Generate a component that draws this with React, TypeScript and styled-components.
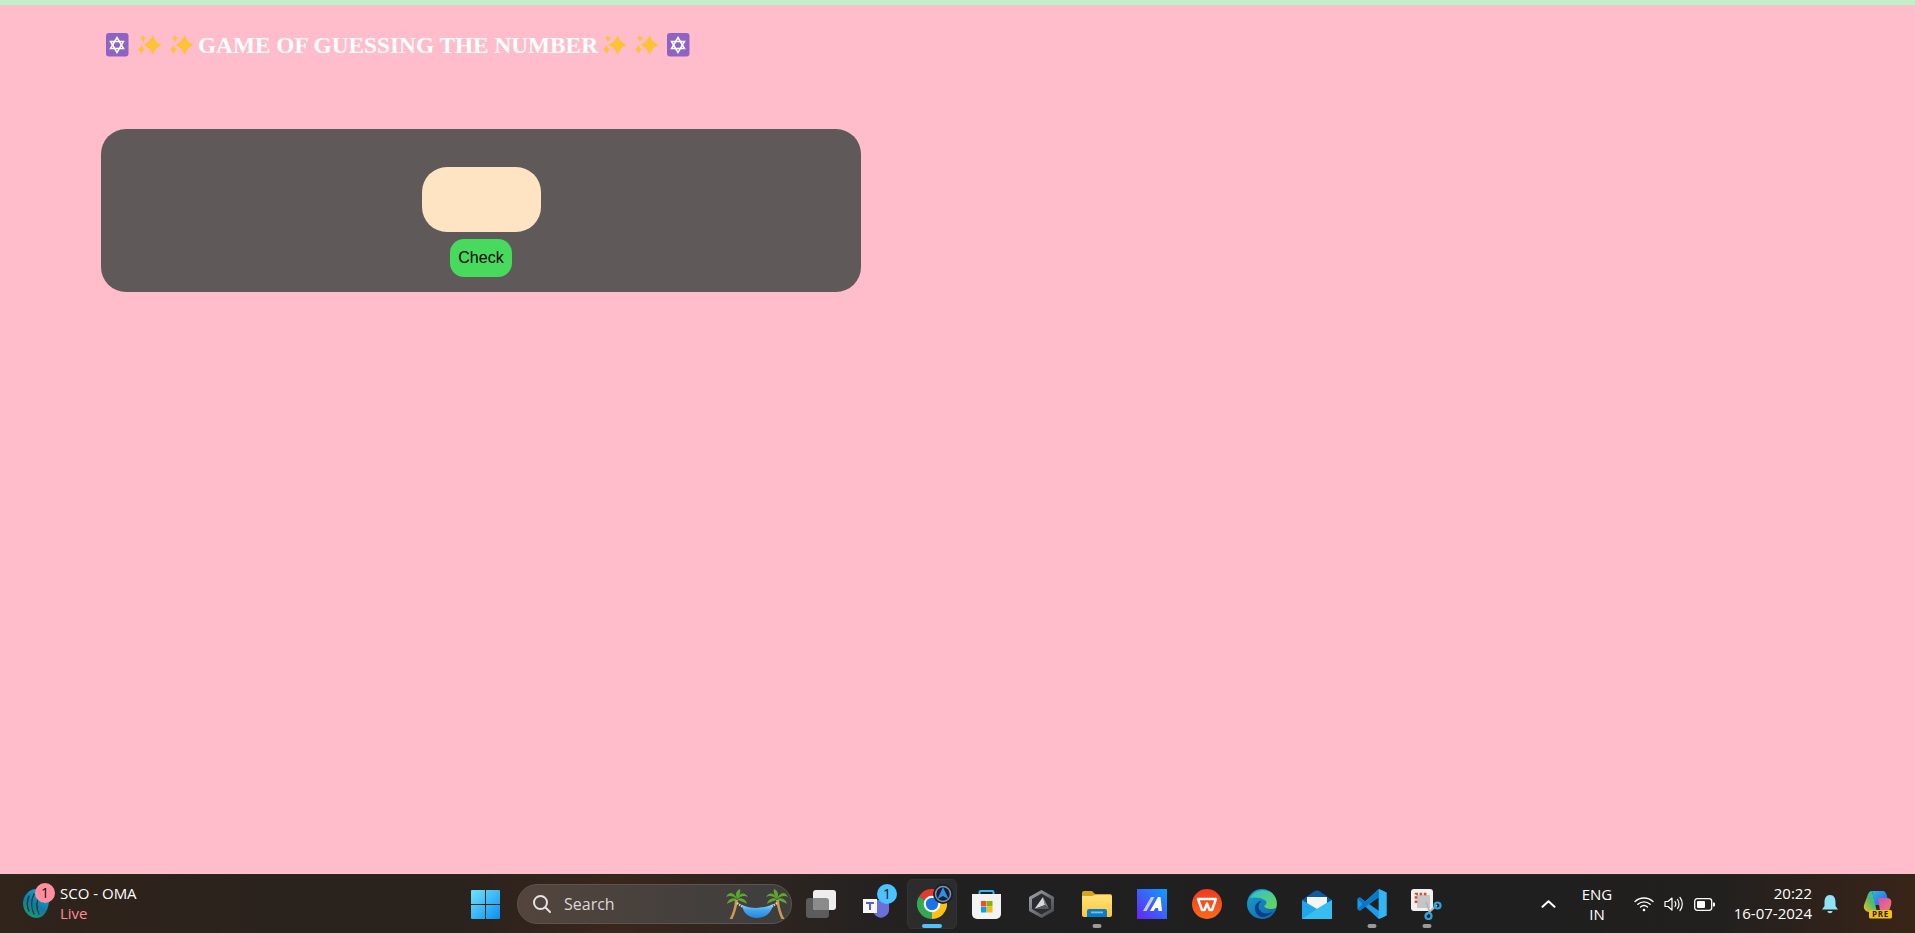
import React from "react";
import styled, { createGlobalStyle } from "styled-components";

const Global = createGlobalStyle`
  html, body { margin: 0; padding: 0; height: 100%; overflow: hidden; }
  #root { height: 100%; }
`;

const Screen = styled.div`
  width: 1915px; height: 933px; display: flex; flex-direction: column; background: #ffbcca;
`;
const TopStrip = styled.div`height: 5px; background: #c1f0c8; flex: none;`;
const Page = styled.main`flex: 1; padding: 0 0 0 101px; min-height: 0;`;
const Title = styled.h1`
  margin: 24px 0 0 4px; height: 32px; white-space: nowrap; color: #fff;
  font: bold 23.3px/32px "Liberation Serif", serif; display: flex; align-items: center;
`;
const Emoji = styled.svg<{ $gap?: number; $lead?: number }>`
  width: 24px; height: 24px; flex: none; margin-right: ${p => p.$gap ?? 0}px; margin-left: ${p => p.$lead ?? 0}px;
`;
const Card = styled.section`
  margin-top: 68px; width: 760px; height: 163px; background: #5f5a59; border-radius: 25px;
  display: flex; flex-direction: column; align-items: center; box-sizing: border-box; padding-top: 38px;
`;
const GuessInput = styled.input`
  width: 119px; height: 65px; border: 0; border-radius: 25px; background: #ffe4c4; padding: 0; outline: 0;
  display: block;
`;
const CheckButton = styled.button`
  margin-top: 7px; width: 62px; height: 38px; border: 0; border-radius: 14px; background: #47da5d; color: #000;
  font: 16px "Liberation Sans", sans-serif; padding: 0;
`;
const Taskbar = styled.footer`
  flex: none; height: 59px; display: flex; align-items: center; color: #fff;
  font-family: "Open Sans", "Noto Sans", sans-serif;
  background: linear-gradient(90deg, #30241b 0%, #2a221c 14%, #2a221d 24%, #3a261c 32%, #2d2521 40%, #212020 48%, #1f1f1f 80%, #22201e 90%, #3a2418 100%);
  border-top: 1px solid #2a2624; box-sizing: border-box;
`;
const Widget = styled.div`width: 460px; flex: none; display: flex; align-items: center; padding-left: 22px; box-sizing: border-box; gap: 9px;`;
const IconWrap = styled.div<{ $w: number; $h: number }>`position: relative; flex: none; width: ${p => p.$w}px; height: ${p => p.$h}px;`;
const Badge = styled.span<{ $bg: string; $top: number; $right: number }>`
  position: absolute; top: ${p => p.$top}px; right: ${p => p.$right}px; width: 20px; height: 20px; border-radius: 50%; background: ${p => p.$bg};
  color: #111; font-size: 14px; line-height: 20px; text-align: center;
`;
const WidgetText = styled.div`display: flex; flex-direction: column; font-size: 15px; line-height: 20px; white-space: nowrap; padding-bottom: 2px; margin-left: -1px;`;
const Live = styled.span`color: #ff8a9c;`;
const StartSlot = styled.div`width: 50px; flex: none; display: flex; justify-content: center;`;
const SearchBox = styled.div`
  margin-left: 7px; margin-right: 2px; width: 275px; height: 40px; flex: none; border-radius: 20px; box-sizing: border-box;
  background: linear-gradient(90deg, #53453d, #45403d 60%, #3f3e3d); border: 1px solid #5a5552;
  display: flex; align-items: center; padding: 0 3px 0 14px; color: #d9d9d9; font-size: 16px;
`;
const SearchLabel = styled.span`margin-left: 12px; flex: 1;`;
const Slot = styled.div<{ $active?: boolean }>`
  position: relative; isolation: isolate; width: 55px; height: 50px; flex: none; display: flex; align-items: center; justify-content: center;
  &::before { content: ""; position: absolute; z-index: -1; inset: 0 2.5px; border-radius: 5px;
    background: ${p => (p.$active ? "#2c2c2c" : "transparent")}; border: ${p => (p.$active ? "1px solid #333" : "0")}; }
`;
const Running = styled.span<{ $active?: boolean }>`
  position: absolute; bottom: 1px; left: 50%; transform: translateX(-50%); height: 4px; border-radius: 2px;
  width: ${p => (p.$active ? 20 : 9)}px; background: ${p => (p.$active ? "#4cc2ff" : "#9a9a9a")};
`;
const Tray = styled.div`
  margin-left: auto; display: flex; align-items: center; font-size: 15px; line-height: 20px; height: 100%;
`;
const Caret = styled.div`width: 16px; display: flex; justify-content: center; margin-right: 21px;`;
const Lang = styled.div`width: 40px; text-align: center; margin-right: 17px;`;
const TrayIcons = styled.div`display: flex; align-items: center; gap: 10px; margin-right: 7px;`;
const Clock = styled.div`width: 90px; text-align: right; white-space: nowrap; padding-bottom: 2px;`;
const Bell = styled.div`margin: 0 23px 0 8px; width: 20px; display: flex; justify-content: center;`;
const Copilot = styled.div`margin-right: 22px; width: 30px; display: flex;`;
const ChromeBadge = styled.span`
  position: absolute; top: 4.5px; left: 29px; width: 20px; height: 20px; display: flex;
`;

const Star = ({ gap, lead }: { gap?: number; lead?: number }) => (
  <Emoji viewBox="0 0 24 24" $gap={gap} $lead={lead}>
    <rect x="1" y="0" width="22.500" height="23.500" rx="3" fill="#8e63c4" />
    <g fill="none" stroke="#fff" strokeWidth="1.500">
      <path d="M12 4.500 18.500 15.500H5.500Z" />
      <path d="M12 19.500 5.500 8.500H18.500Z" />
    </g>
  </Emoji>
);
const Sparkles = ({ gap, lead }: { gap?: number; lead?: number }) => (
  <Emoji viewBox="0 0 24 24" $gap={gap} $lead={lead}>
    <g fill="#fcc434">
      <path d="M14.500 2Q17 9.500 23.500 12 17 14.500 14.500 22 12 14.500 5.500 12 12 9.500 14.500 2Z" />
      <path d="M5 2Q5.800 4.600 8 5.500 5.800 6.400 5 9 4.200 6.400 2 5.500 4.200 4.600 5 2Z" />
      <path d="M3.500 12Q4.400 15.200 7 16.500 4.400 17.800 3.500 21 2.600 17.800 0 16.500 2.600 15.200 3.500 12Z" />
    </g>
  </Emoji>
);

const Ic = styled.svg`display: block; flex: none;`;

const IccLogo = () => (
  <Ic width="30" height="32" viewBox="0 0 30 32">
    <defs>
      <linearGradient id="icc" x1="0.8" y1="0" x2="0.2" y2="1">
        <stop offset="0" stopColor="#17a9de" /><stop offset=".55" stopColor="#0f7ca0" /><stop offset="1" stopColor="#1f9a6a" />
      </linearGradient>
    </defs>
    <path d="M14 1C20 1 26 4 27 12 27 21 22 30 15 30 8 30 1 24 1 15 1 8 7 1 14 1Z" fill="url(#icc)" />
    <g fill="none" stroke="#17302f" strokeWidth="1.200" strokeLinecap="round">
      <path d="M7 8C5 13 5 19 7 23" />
      <path d="M12 6C9 12 9 20 12 26" />
      <path d="M18 7C14 13 14 20 17 26" />
    </g>
  </Ic>
);
const WinLogo = () => (
  <Ic width="29" height="29" viewBox="0 0 29 29">
    <defs>
      <linearGradient id="win" x1="0" y1="0" x2="1" y2="1">
        <stop offset="0" stopColor="#6fe3fb" /><stop offset="1" stopColor="#0a8ff0" />
      </linearGradient>
    </defs>
    <path fill="url(#win)" d="M1 0H14V14H0V1A1 1 0 0 1 1 0ZM15 0H28A1 1 0 0 1 29 1V14H15ZM0 15H14V29H1A1 1 0 0 1 0 28ZM15 15H29V28A1 1 0 0 1 28 29H15Z" />
  </Ic>
);
const SearchGlass = () => (
  <Ic width="20" height="20" viewBox="0 0 20 20" fill="none" stroke="#e4e4e4" strokeWidth="2" strokeLinecap="round">
    <circle cx="8.500" cy="8.500" r="6.500" /><path d="M13.500 13.500 18 18" />
  </Ic>
);
const Palm = () => (
  <g>
    <path d="M9 11C8.500 18 6.500 25 3.500 30H6.500C9 25 11 18 12 11Z" fill="#c79a5a" />
    <g fill="#5fa82e">
      <path d="M11 10C8 3 3 2 0 8 4 6 7 7 11 10Z" /><path d="M11 10C9 5 10 2 14 0 15 4 13 7 11 10Z" />
      <path d="M11 10C14 3 19 3 22 8 18 6 15 7 11 10Z" /><path d="M11 10C7 8 2 10 1 15 5 12 8 13 11 10Z" />
      <path d="M11 10C15 8 20 10 21 15 17 12 14 13 11 10Z" />
    </g>
  </g>
);
const Hammock = () => (
  <Ic width="62" height="31" viewBox="0 0 62 31">
    <Palm />
    <g transform="translate(62 0) scale(-1 1)"><Palm /></g>
    <path d="M11 14 20 20M51 14 42 20" stroke="#d5d5d5" strokeWidth="2.200" strokeDasharray="1.500 1" fill="none" />
    <defs>
      <linearGradient id="hmk" x1="0" y1="0" x2="0" y2="1"><stop offset="0" stopColor="#9adafa" /><stop offset=".45" stopColor="#3ea6ee" /><stop offset="1" stopColor="#2a86d8" /></linearGradient>
    </defs>
    <path d="M16 16C25 20 37 20 47 15 46 24 39 29 31 29 23 29 17 24 16 16Z" fill="url(#hmk)" />
  </Ic>
);
const TaskView = () => (
  <Ic width="31" height="28" viewBox="0 0 31 28">
    <rect x="0" y="8" width="23" height="20" rx="3" fill="#5c5c5c" />
    <rect x="7" y="0" width="23" height="20" rx="3" fill="#eeeeee" />
    <path d="M7 8H20A3 3 0 0 1 23 11V20H10A3 3 0 0 1 7 17Z" fill="#8b8b8b" />
  </Ic>
);
const Teams = () => (
  <Ic width="27" height="27" viewBox="0 0 27 27">
    <circle cx="21" cy="10" r="5" fill="#5059c9" />
    <path d="M10 9H24A2 2 0 0 1 26 11V17A8 8 0 0 1 10 20Z" fill="#6a70d8" />
    <rect x="0" y="8" width="14" height="14" fill="#f7f7f7" />
    <path d="M3 11H11V13H8V19H6V13H3Z" fill="#5b5fc7" />
  </Ic>
);
const Chrome = () => (
  <Ic width="30" height="30" viewBox="0 0 30 30">
    <path d="M15 15 2 7.500A15 15 0 0 1 28 7.500Z" fill="#e33b2e" />
    <path d="M15 15 2 7.500A15 15 0 0 0 15 30Z" fill="#34a853" />
    <path d="M15 15 15 30A15 15 0 0 0 28 7.500Z" fill="#fbc116" />
    <circle cx="15" cy="15" r="8.300" fill="#fff" />
    <circle cx="15" cy="15" r="6.200" fill="#1a73e8" />
  </Ic>
);
const SmallA = () => (
  <Ic width="20" height="20" viewBox="0 0 20 20">
    <circle cx="10" cy="10" r="10" fill="#16202e" />
    <circle cx="10" cy="10" r="7.500" fill="none" stroke="#7f93aa" strokeWidth="1.500" />
    <path d="M10 3 15.500 15 10 12 4.500 15Z" fill="#2f8ee8" />
  </Ic>
);
const Store = () => (
  <Ic width="29" height="29" viewBox="0 0 29 29">
    <path d="M7.500 5V2A1 1 0 0 1 8.500 1H20.500A1 1 0 0 1 21.500 2V5" stroke="#35b8f0" strokeWidth="2" fill="none" />
    <path d="M0 4H29V24A5 5 0 0 1 24 29H5A5 5 0 0 1 0 24Z" fill="#f3f3f3" />
    <rect x="9" y="11" width="5.500" height="5.500" fill="#f25022" /><rect x="15" y="11" width="5.500" height="5.500" fill="#7fba00" />
    <rect x="9" y="17" width="5.500" height="5.500" fill="#00a4ef" /><rect x="15" y="17" width="5.500" height="5.500" fill="#ffb900" />
  </Ic>
);
const Gem = () => (
  <Ic width="27" height="28" viewBox="0 0 27 28">
    <defs>
      <linearGradient id="gm" x1="0" y1="0" x2="1" y2="1"><stop offset="0" stopColor="#a4a8ad" /><stop offset="1" stopColor="#3f4247" /></linearGradient>
    </defs>
    <path d="M13.500 0 26 7V21L13.500 28 1 21V7Z" fill="url(#gm)" />
    <path d="M13.500 3.500 23 9V19L13.500 24.500 4 19V9Z" fill="#2a2c30" />
    <path d="M15 7 6.500 19 17 15Z" fill="#d6d8db" />
    <path d="M15 7 21 19 17 15Z" fill="#85888d" />
    <path d="M6.500 19H21L17 15Z" fill="#55585d" />
  </Ic>
);
const Folder = () => (
  <Ic width="30" height="26" viewBox="0 0 30 26">
    <defs>
      <linearGradient id="fld" x1="0" y1="0" x2="0" y2="1"><stop offset="0" stopColor="#ffe27a" /><stop offset="1" stopColor="#f9c63d" /></linearGradient>
    </defs>
    <path d="M0 2A2 2 0 0 1 2 0H10L13 3H28A2 2 0 0 1 30 5V10H0Z" fill="#d9a514" />
    <path d="M0 5H10L13 4H28A2 2 0 0 1 30 6V24A2 2 0 0 1 28 26H2A2 2 0 0 1 0 24Z" fill="url(#fld)" />
    <path d="M5 20A2 2 0 0 1 7 18H23A2 2 0 0 1 25 20V26H5Z" fill="#0c7cc4" />
    <rect x="9" y="20.500" width="12" height="1.800" fill="#6cc5f0" />
  </Ic>
);
const MApp = () => (
  <Ic width="30" height="30" viewBox="0 0 30 30">
    <defs>
      <linearGradient id="mapp" x1="0" y1="1" x2="1" y2="0">
        <stop offset="0" stopColor="#6a22f5" /><stop offset="1" stopColor="#0aa0ff" />
      </linearGradient>
    </defs>
    <rect width="30" height="30" fill="url(#mapp)" />
    <path d="M6 22 14 8H17.500L9.500 22Z" fill="#c8ccfa" />
    <path d="M13 22 21 8H23.500L25 22H21.500L21 19H18.500L16.500 22Z" fill="#fff" />
  </Ic>
);
const Wps = () => (
  <Ic width="30" height="30" viewBox="0 0 30 30">
    <defs>
      <linearGradient id="wps" x1="0" y1="0" x2="0" y2="1"><stop offset="0" stopColor="#ee3a20" /><stop offset="1" stopColor="#fb6a1c" /></linearGradient>
    </defs>
    <circle cx="15" cy="15" r="15" fill="url(#wps)" />
    <path d="M6 10H24L20 21H17.500L15 14.500 12.500 21H10Z" fill="none" stroke="#fff" strokeWidth="2.400" strokeLinejoin="round" />
  </Ic>
);
const Edge = () => (
  <Ic width="30" height="30" viewBox="0 0 30 30">
    <defs>
      <linearGradient id="edg" x1="0" y1="0" x2="1" y2="1">
        <stop offset="0" stopColor="#1aa3c9" /><stop offset="1" stopColor="#1060b0" />
      </linearGradient>
      <linearGradient id="edg2" x1="0" y1="0" x2="1" y2="1">
        <stop offset="0" stopColor="#2fc0d8" /><stop offset="1" stopColor="#6cd64a" />
      </linearGradient>
    </defs>
    <circle cx="15" cy="15" r="15" fill="url(#edg)" />
    <path d="M3 9C7 1 18 -1 25 4 29 8 31 13 29 19 24 21 18 20 17 17 19 16 20 14 19 12 15 8 6 8 3 9Z" fill="url(#edg2)" />
    <path d="M20 27C14 30 8 26 8 19 8 15 11 12 15 12 12 14 11 17 12 20 14 24 18 26 26 23 24 25 22 26 20 27Z" fill="#0c3f8a" />
  </Ic>
);
const Mail = () => (
  <Ic width="30" height="29" viewBox="0 0 30 29">
    <path d="M0 10 12 1.500Q15 -.5 18 1.500L30 10 15 20Z" fill="#0c5aa8" />
    <path d="M5 7H25V14L15 20 5 14Z" fill="#f5f5f5" />
    <path d="M0 10 15 19 30 10V29H0Z" fill="#1fa5ea" />
    <path d="M30 10V29H0L15 19Z" fill="#38bdf2" />
  </Ic>
);
const VsCode = () => (
  <Ic width="30" height="30" viewBox="0 0 30 31">
    <path d="M22 0 30 3.500V27.500L22 31 8 18 2.500 22.500 0 21V10L2.500 8.500 8 13ZM22 8.500 12 15.500 22 22.500Z" fill="#1a9ce8" />
    <path d="M22 0 30 3.500V27.500L22 31Z" fill="#35b4f2" />
    <path d="M0 21 2.500 22.500 22 8.500V0L8 13 2.500 8.500 0 10 5 15.500Z" fill="#0a78c8" />
  </Ic>
);
const Snip = () => (
  <Ic width="31" height="31" viewBox="0 0 31 31">
    <rect width="22" height="22" rx="3" fill="#f1f1f1" />
    <rect x="6" y="6" width="13" height="13" fill="#c6c6c6" />
    <path d="M5 14V5H16" fill="none" stroke="#db4a2c" strokeWidth="2.600" strokeDasharray="2.600 1.600" />
    <path d="M15 13 19 24M26 16 15 26" stroke="#b5b5b5" strokeWidth="1.800" fill="none" />
    <circle cx="26.500" cy="16.500" r="3" fill="none" stroke="#27a5e5" strokeWidth="2.200" />
    <circle cx="17.500" cy="27" r="3" fill="none" stroke="#27a5e5" strokeWidth="2.200" />
  </Ic>
);
const CaretUp = () => (
  <Ic width="15" height="8" viewBox="0 0 15 8" fill="none" stroke="#fff" strokeWidth="2" strokeLinecap="round" strokeLinejoin="round">
    <path d="M1.500 6.800 7.500 1.200 13.500 6.800" />
  </Ic>
);
const Wifi = () => (
  <Ic width="20" height="16" viewBox="0 0 20 16" fill="none" stroke="#fff" strokeWidth="1.300" strokeLinecap="round">
    <path d="M1 5.500C6 .8 14 .8 19 5.500" /><path d="M3.800 8.300C7.500 5 12.500 5 16.200 8.300" /><path d="M6.500 11C8.500 9.300 11.500 9.300 13.500 11" />
    <circle cx="10" cy="14" r="1.300" fill="#fff" stroke="none" />
  </Ic>
);
const Volume = () => (
  <Ic width="20" height="16" viewBox="0 0 20 16" fill="none" stroke="#fff" strokeWidth="1.200" strokeLinecap="round" strokeLinejoin="round">
    <path d="M1 5.500V10.500H4L8 14V2L4 5.500Z" />
    <path d="M11 5.500C12 7 12 9 11 10.500" /><path d="M13.500 3.500C15.500 6 15.500 10 13.500 12.500" /><path d="M16 1.500C19 5 19 11 16 14.500" />
  </Ic>
);
const Battery = () => (
  <Ic width="21" height="13" viewBox="0 0 21 13">
    <rect x=".7" y=".7" width="17" height="11.600" rx="2.500" fill="none" stroke="#fff" strokeWidth="1.300" />
    <rect x="3" y="3" width="8" height="7" rx="1" fill="#fff" />
    <path d="M19 4.500H20A1 1 0 0 1 21 5.500V7.500A1 1 0 0 1 20 8.500H19Z" fill="#fff" />
  </Ic>
);
const BellIcon = () => (
  <Ic width="16" height="19" viewBox="0 0 16 19">
    <path d="M8 0C12 0 13.500 3.500 13.500 7V11L16 14.500H0L2.500 11V7C2.500 3.500 4 0 8 0Z" fill="#8fe3f7" />
    <path d="M5.500 16H10.500C10.500 19 5.500 19 5.500 16Z" fill="#8fe3f7" />
  </Ic>
);
const CopilotIcon = () => (
  <Ic width="30" height="30" viewBox="0 0 30 30">
    <defs>
      <linearGradient id="cp1" x1="0" y1="0" x2="1" y2="1"><stop offset="0" stopColor="#2fb6e8" /><stop offset="1" stopColor="#2a5cd8" /></linearGradient>
      <linearGradient id="cp2" x1="0" y1="1" x2="1" y2="0"><stop offset="0" stopColor="#f7c21a" /><stop offset=".5" stopColor="#58b868" /><stop offset="1" stopColor="#2fb6e8" /></linearGradient>
      <linearGradient id="cp3" x1="0" y1="0" x2="1" y2="1"><stop offset="0" stopColor="#d04fc0" /><stop offset="1" stopColor="#f07a60" /></linearGradient>
    </defs>
    <path d="M9 2H20C22 2 23 4 24 7L26 16H12Z" fill="url(#cp1)" />
    <path d="M9 2C6 2 5 5 4 8L1 16C0 20 3 23 6 23H14Z" fill="url(#cp2)" />
    <path d="M15 9H24C28 9 29 12 28 16L26 22H17Z" fill="url(#cp3)" />
    <rect x="6" y="21" width="23" height="8.500" rx="1.500" fill="#f8bd10" />
    <text x="17.500" y="28" textAnchor="middle" fontSize="8" fontWeight="700" fontFamily="Open Sans, sans-serif" fill="#222" letterSpacing=".8">PRE</text>
  </Ic>
);

export default function App() {
  return (
    <Screen>
      <Global />
      <TopStrip />
      <Page>
        <Title>
          <Star gap={9} /><Sparkles gap={8} /><Sparkles gap={4} />GAME OF GUESSING THE NUMBER<Sparkles lead={5} gap={8} /><Sparkles gap={7} /><Star />
        </Title>
        <Card>
          <GuessInput aria-label="guess" />
          <CheckButton>Check</CheckButton>
        </Card>
      </Page>
      <Taskbar>
        <Widget>
          <IconWrap $w={30} $h={32}><IccLogo /><Badge $bg="#ff8f9f" $top={-5} $right={-3}>1</Badge></IconWrap>
          <WidgetText><span>SCO - OMA</span><Live>Live</Live></WidgetText>
        </Widget>
        <StartSlot><WinLogo /></StartSlot>
        <SearchBox><SearchGlass /><SearchLabel>Search</SearchLabel><Hammock /></SearchBox>
        <Slot><TaskView /></Slot>
        <Slot><IconWrap $w={27} $h={27}><Teams /><Badge $bg="#4cc2ff" $top={-7} $right={-7}>1</Badge></IconWrap></Slot>
        <Slot $active><Chrome /><ChromeBadge><SmallA /></ChromeBadge><Running $active /></Slot>
        <Slot><Store /></Slot>
        <Slot><Gem /></Slot>
        <Slot><Folder /><Running /></Slot>
        <Slot><MApp /></Slot>
        <Slot><Wps /></Slot>
        <Slot><Edge /></Slot>
        <Slot><Mail /></Slot>
        <Slot><VsCode /><Running /></Slot>
        <Slot><Snip /><Running /></Slot>
        <Tray>
          <Caret><CaretUp /></Caret>
          <Lang>ENG<br />IN</Lang>
          <TrayIcons><Wifi /><Volume /><Battery /></TrayIcons>
          <Clock>20:22<br />16-07-2024</Clock>
          <Bell><BellIcon /></Bell>
          <Copilot><CopilotIcon /></Copilot>
        </Tray>
      </Taskbar>
    </Screen>
  );
}
